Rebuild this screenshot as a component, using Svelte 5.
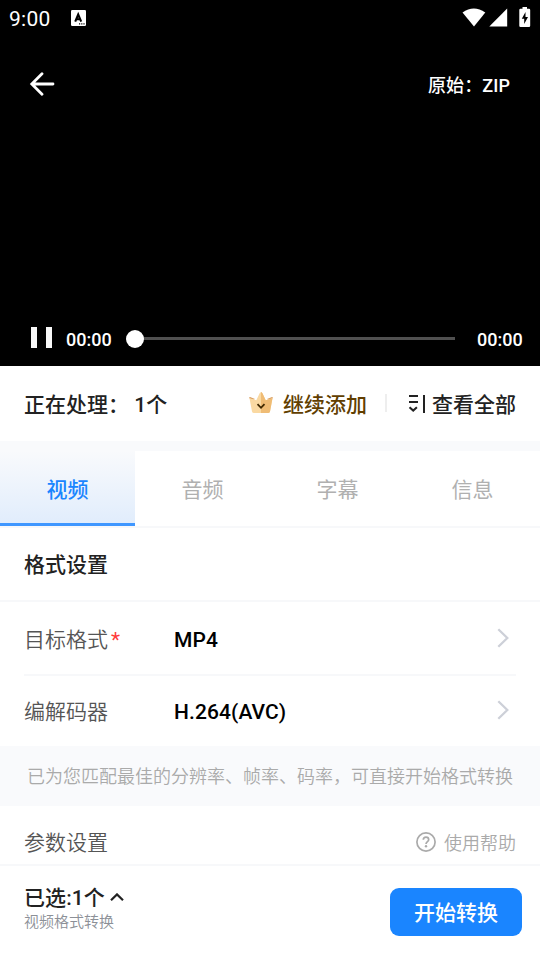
<script lang="ts">
  interface Tab {
    id: string;
    label: string;
  }

  interface Option {
    label: string;
    value: string;
    required: boolean;
  }

  const tabs: Tab[] = [
    { id: 'video', label: '视频' },
    { id: 'audio', label: '音频' },
    { id: 'subtitle', label: '字幕' },
    { id: 'info', label: '信息' },
  ];

  const options: Option[] = [
    { label: '目标格式', value: 'MP4', required: true },
    { label: '编解码器', value: 'H.264(AVC)', required: false },
  ];

  let activeTab = 'video';
</script>

<div class="screen">
  <section class="player">
    <div class="status-bar">
      <span class="clock">9:00</span>
      <svg class="app-icon" width="15" height="16" viewBox="0 0 15 16">
        <rect width="15" height="16" rx="1.2" fill="#fff" />
        <path d="M4.2 11.6 7.2 4.5 10.2 11.6M5.3 9.3H9.3" fill="none" stroke="#000" stroke-width="2.1" />
        <path d="M8 13.2h1.2v1.2H8zM10.2 13.2h1.2v1.2h-1.2zM12.4 13.2h1.2v1.2h-1.2z" fill="#000" />
      </svg>
      <div class="status-icons">
        <svg width="24" height="20" viewBox="0 0 24 20">
          <path d="M.5 4.6Q11.8-3.4 23.3 4.6L12 18.5Z" fill="#fff" />
        </svg>
        <svg width="19" height="20" viewBox="0 0 19 20">
          <path d="M18.2.5V18.5H.3Z" fill="#fff" />
        </svg>
        <svg class="battery" width="12" height="20" viewBox="0 0 12 20">
          <path d="M3.5 0H8V1.7H10Q11.2 1.7 11.2 3V18.7Q11.2 20 10 20H1.5Q.3 20 .3 18.7V3Q.3 1.7 1.5 1.7H3.5Z" fill="#fff" />
          <path d="M6.5 5 2.8 11.7H5.2V17L9 9.9H6.5Z" fill="#000" />
        </svg>
      </div>
    </div>

    <div class="player-top">
      <button class="back" aria-label="返回">
        <svg width="26" height="24" viewBox="0 0 26 24">
          <path d="M13 1.7 2.8 12 13 22.3M3 12H24" fill="none" stroke="#fff" stroke-width="2.8" stroke-linecap="round" />
        </svg>
      </button>
      <span class="origin">原始：ZIP</span>
    </div>

    <div class="controls">
      <button class="pause" aria-label="暂停"><i></i><i></i></button>
      <span class="time">00:00</span>
      <div class="track"><div class="line"></div><div class="thumb"></div></div>
      <span class="time">00:00</span>
    </div>
  </section>

  <section class="queue">
    <span class="processing">正在处理： 1个</span>
    <button class="add">
      <svg width="26" height="22" viewBox="0 0 26 22">
        <path d="M5 8 1.2 6.3A1 1 0 0 1 2 4.9L7 7Z" fill="#d99f62" />
        <path d="M21 8 24.8 6.3A1 1 0 0 0 24 4.9L19 7Z" fill="#d99f62" />
        <path d="M1.5 6.2 8.3 8.2 11.5 1.5Q13-1 14.5 1.5L17.7 8.2 24.5 6.2 22 19.5Q21.6 21 20 21H6Q4.4 21 4 19.5Z" fill="#fad9a2" />
        <path d="M13 0Q14 0 14.6 1.5L17.7 8.2 24.5 6.2 22 19.5Q21.6 21 20 21H13Z" fill="#efbc75" />
        <path d="M9.5 12.2 13 15.8 16.5 12.2" fill="none" stroke="#3f2800" stroke-width="1.8" />
      </svg>
      继续添加
    </button>
    <span class="divider"></span>
    <button class="view-all">
      <svg width="18" height="20" viewBox="0 0 18 20">
        <path d="M1 3H10M1 9H10M1.5 14.2 5.2 17.6 8.9 14.2M16 2V20" fill="none" stroke="#222" stroke-width="2" />
      </svg>
      查看全部
    </button>
  </section>

  <nav class="tabs">
    {#each tabs as tab}
      <button class="tab" class:active={tab.id === activeTab} on:click={() => (activeTab = tab.id)}>{tab.label}</button>
    {/each}
  </nav>

  <main>
    <h2>格式设置</h2>
    <div class="options">
      {#each options as option}
        <div class="row">
          <span class="label">{option.label}{#if option.required}<em>*</em>{/if}</span>
          <span class="value">{option.value}</span>
          <svg width="12" height="20" viewBox="0 0 12 20">
            <path d="M1.3 1.2 10.3 10 1.3 18.8" fill="none" stroke="#cdd0d8" stroke-width="2.3" />
          </svg>
        </div>
      {/each}
    </div>
    <p class="hint">已为您匹配最佳的分辨率、帧率、码率，可直接开始格式转换</p>
    <div class="params">
      <span class="label">参数设置</span>
      <button class="help">
        <svg width="20" height="20" viewBox="0 0 20 20">
          <circle cx="10" cy="10" r="9.1" fill="none" stroke="#aaa" stroke-width="1.7" />
          <path d="M7.3 7.8Q7.3 5.2 10 5.2T12.7 7.7C12.7 9.6 10 9.7 10 12" fill="none" stroke="#aaa" stroke-width="1.7" />
          <circle cx="10" cy="14.3" r="1.2" fill="#aaa" />
        </svg>
        使用帮助
      </button>
    </div>
  </main>

  <footer>
    <div class="summary">
      <div class="selected">
        已选:1个
        <svg width="14" height="10" viewBox="0 0 14 10">
          <path d="M1 7.2 7 1.4 13 7.2" fill="none" stroke="#222" stroke-width="2.2" />
        </svg>
      </div>
      <div class="mode">视频格式转换</div>
    </div>
    <button class="start">开始转换</button>
  </footer>
</div>

<style>
:global(body) {
  margin: 0;
  background: #fff;
}

.screen {
  display: flex;
  flex-direction: column;
  width: 540px;
  height: 960px;
  overflow: hidden;
  background: #fff;
  color: #222;
  font-family: Roboto, "Noto Sans CJK SC", sans-serif;
  font-size: 21px;
}

.screen * {
  box-sizing: border-box;
}

svg {
  display: block;
  flex: none;
}

button {
  padding: 0;
  border: none;
  background: none;
  color: inherit;
  font: inherit;
  cursor: pointer;
}

.player {
  display: flex;
  flex-direction: column;
  flex: none;
  height: 366px;
  background: #000;
  color: #fff;
}

.status-bar {
  display: flex;
  align-items: center;
  height: 36px;
  padding: 0 9px;
}

.clock {
  width: 62px;
  font-size: 21px;
  letter-spacing: 0.3px;
  padding-top: 2px;
}

.status-icons {
  display: flex;
  margin-left: auto;
  gap: 3px;
}

.battery {
  margin: -1px 0 0 8px;
}

.player-top {
  display: flex;
  align-items: center;
  justify-content: space-between;
  height: 96px;
  padding: 0 30px 0 29px;
}

.origin {
  font-size: 18px;
  font-weight: 500;
  letter-spacing: 0.1px;
}

.controls {
  display: flex;
  align-items: center;
  height: 56px;
  margin-top: auto;
  padding: 0 18px 0 31px;
}

.pause {
  display: flex;
  gap: 9px;
  width: 35px;
}

.pause i {
  width: 6px;
  height: 21px;
  margin-top: -2px;
  background: #f8f8f8;
}

.time {
  width: 45px;
  padding-top: 3px;
  font-size: 18px;
  font-weight: 500;
  white-space: nowrap;
}

.track {
  display: flex;
  align-items: center;
  flex: 1;
  position: relative;
  height: 18px;
  margin: 1px 22px 0 15px;
}

.line {
  flex: 1;
  height: 3px;
  margin-left: 9px;
  background: #505050;
}

.thumb {
  position: absolute;
  left: 0;
  top: 0;
  width: 18px;
  height: 18px;
  border-radius: 50%;
  background: #fff;
}

.queue {
  display: flex;
  align-items: center;
  flex: none;
  height: 75px;
  padding: 0 24px 2px;
  font-weight: 500;
  white-space: nowrap;
}

.processing {
  white-space: pre;
}

.add {
  display: flex;
  align-items: center;
  gap: 9px;
  margin-left: auto;
  color: #613e00;
}

.divider {
  width: 2px;
  height: 18px;
  margin: 0 21px 0 18px;
  background: #eee;
}

.view-all {
  display: flex;
  align-items: center;
  gap: 6px;
}

.tabs {
  display: grid;
  grid-template-columns: repeat(4, 1fr);
  flex: none;
  height: 87px;
  padding-top: 10px;
  border-bottom: 2px solid #f7f8fa;
  background: linear-gradient(#f9fafc 10px, #fff 10px);
}

.tab {
  padding-bottom: 1px;
  color: #b0b0b0;
}

.tab.active {
  padding: 2px 0 0;
  border-bottom: 3px solid #3f97ff;
  background: linear-gradient(#f9fafc, #e1edfc) padding-box;
  color: #1a85ff;
  font-weight: 500;
}

main {
  height: 336px;
  overflow: hidden;
}

h2 {
  height: 74px;
  margin: 0;
  padding-left: 24px;
  border-bottom: 2px solid #f7f8fa;
  font-size: 21px;
  font-weight: 500;
  line-height: 75px;
}

.options {
  padding: 0 24px;
}

.row {
  display: flex;
  align-items: center;
  height: 74px;
  padding-right: 7px;
  border-bottom: 2px solid #f7f8fa;
}

.row:last-child {
  height: 70px;
  padding-bottom: 2px;
  border: none;
}

.label {
  width: 150px;
  color: #555;
  font-weight: 350;
}

.label em {
  margin-left: 3px;
  color: #ff3b3b;
  font-style: normal;
  font-weight: 400;
}

.value {
  flex: 1;
  padding-top: 3px;
  color: #000;
  font-weight: 500;
  letter-spacing: 0.1px;
}

.hint {
  height: 60px;
  margin: 0;
  background: #f9fafc;
  color: #aaa;
  font-size: 18px;
  font-weight: 350;
  line-height: 62px;
  text-align: center;
  white-space: nowrap;
}

.params {
  display: flex;
  align-items: center;
  justify-content: space-between;
  height: 72px;
  padding: 0 24px;
}

.params .label {
  padding-bottom: 2px;
}

.help {
  display: flex;
  align-items: center;
  gap: 8px;
  color: #aaa;
  font-size: 18px;
  font-weight: 350;
}

footer {
  display: flex;
  align-items: flex-start;
  justify-content: space-between;
  flex: none;
  height: 96px;
  padding: 22px 18px 0 24px;
  border-top: 2px solid #f7f8fa;
}

.selected {
  display: flex;
  align-items: center;
  gap: 5px;
  height: 20px;
  font-weight: 500;
  letter-spacing: 0.1px;
  line-height: 20px;
}

.mode {
  margin-top: 3px;
  color: #8c9097;
  font-size: 15px;
  font-weight: 350;
  line-height: 22px;
}

.start {
  width: 132px;
  height: 48px;
  padding-bottom: 2px;
  border-radius: 9px;
  background: #1a85ff;
  color: #fff;
  font-weight: 500;
}
</style>
